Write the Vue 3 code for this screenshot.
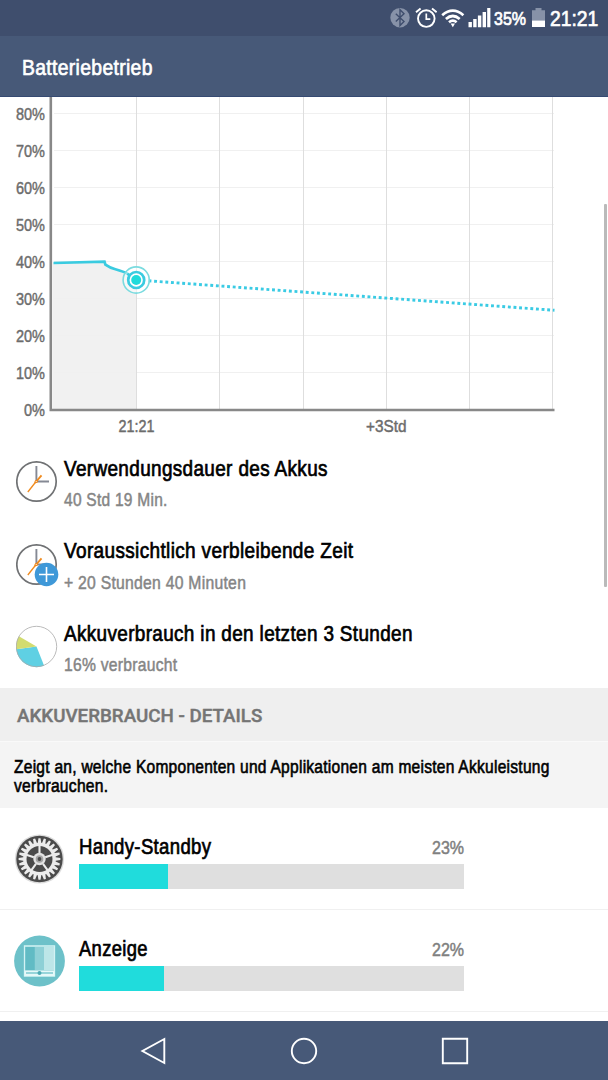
<script setup>
import { computed } from 'vue'

// squeezes a text to a given width, for the condensed look of the system font
const vFit = {
  mounted(el, { value }) {
    el.style.transform = `scaleX(${value / el.offsetWidth})`
  },
}

const yLabels = [
  { text: '80%', y: 113, width: 29 },
  { text: '70%', y: 150, width: 29 },
  { text: '60%', y: 187, width: 29 },
  { text: '50%', y: 224, width: 29 },
  { text: '40%', y: 261, width: 29 },
  { text: '30%', y: 298, width: 29 },
  { text: '20%', y: 335, width: 29 },
  { text: '10%', y: 372, width: 29 },
  { text: '0%', y: 409, width: 21 },
]
const gridX = [136, 219.5, 303, 386.2, 469.6, 552.8]

const summary = [
  { icon: 'clock', title: 'Verwendungsdauer des Akkus', titleWidth: 263.5, sub: '40 Std 19 Min.', subWidth: 104 },
  { icon: 'plus', title: 'Voraussichtlich verbleibende Zeit', titleWidth: 289.5, sub: '+ 20 Stunden 40 Minuten', subWidth: 182 },
  { icon: 'pie', title: 'Akkuverbrauch in den letzten 3 Stunden', titleWidth: 348.5, sub: '16% verbraucht', subWidth: 113.5 },
]

const consumers = [
  { icon: 'gear', name: 'Handy-Standby', nameWidth: 132.5, percent: 23 },
  { icon: 'display', name: 'Anzeige', nameWidth: 68.5, percent: 22 },
]

// outline of the toothed ring in the standby icon
const gearPath = computed(() => {
  const teeth = 24
  const points = []
  for (let i = 0; i < teeth; i++) {
    const steps = [
      [0, 16.3],
      [0.22, 20.9],
      [0.6, 20.9],
      [0.82, 16.3],
    ]
    for (const [offset, r] of steps) {
      const a = ((i + offset - 0.41) / teeth) * Math.PI * 2 - Math.PI / 2
      points.push(`${(26 + r * Math.cos(a)).toFixed(2)} ${(26 + r * Math.sin(a)).toFixed(2)}`)
    }
  }
  return `M${points.join('L')}Z`
})
const spokes = [0, 72, 144, 216, 288]
</script>

<template>
  <div class="screen">
    <div class="status">
      <svg class="status__bt" width="20" height="22" viewBox="390 7 20 22">
        <circle cx="400" cy="17.7" r="9.7" fill="#8792a8" />
        <path d="M395.8 13.8l8.2 7.8-4 4V9.8l4 4-8.2 7.8" fill="none" stroke="#3f4e6d" stroke-width="1.4" />
      </svg>
      <svg class="status__alarm" width="22" height="22" viewBox="415 7 22 22" fill="none" stroke="#fff">
        <circle cx="426.3" cy="18.6" r="8.3" stroke-width="1.9" />
        <path d="M426.3 13.5v5.6h4" stroke-width="1.7" />
        <path d="M416 12.2l4.6-3.8M436.6 12.2l-4.6-3.8" stroke-width="1.9" />
      </svg>
      <svg class="status__wifi" width="24" height="22" viewBox="441 7 24 22" fill="none" stroke="#fff" stroke-width="2.7">
        <path d="M442.2 15.2q10.6-9.2 21.2 0" />
        <path d="M445.9 19q6.9-6 13.8 0" />
        <path d="M449 22.2q3.8-3.2 7.6 0" />
        <path d="M450.6 23.6h4.4l-2.2 3.6z" fill="#fff" stroke="none" />
      </svg>
      <svg class="status__signal" width="23" height="22" viewBox="468 7 23 22" fill="#fff">
        <path d="M468.5 22h3.4v5.3h-3.4zM473.2 19h3.4v8.3h-3.4zM477.9 15.6h3.4v11.7h-3.4zM482.6 12h3.4v15.3h-3.4zM487.2 8h3.2v19.3h-3.2z" />
      </svg>
      <span class="status__percent"><span v-fit="32" class="fit">35%</span></span>
      <svg class="status__battery" width="14" height="22" viewBox="532 7 14 22">
        <path d="M535.5 8h6v2.2h3.5v11H532v-11h3.5z" fill="#8792a8" />
        <path d="M532 20.6h13V27h-13z" fill="#fff" />
      </svg>
      <span class="status__time"><span v-fit="48" class="fit">21:21</span></span>
    </div>

    <header class="title"><span v-fit="130.5" class="fit">Batteriebetrieb</span></header>

    <main class="content">
      <svg class="chart" width="608" height="343" viewBox="0 97 608 343">
        <path d="M53 263l51-1.3 1 2.6q4 3 10 4.4 12 2.6 21 11.6V409H53z" fill="#f1f1f1" />
        <g class="chart__grid">
          <line v-for="l in yLabels.slice(0, 8)" :key="l.text" x1="54" x2="554" :y1="l.y" :y2="l.y" stroke="#f0f0f0" />
          <line v-for="x in gridX" :key="x" :x1="x" :x2="x" y1="97" y2="409" stroke="#dedede" />
        </g>
        <path d="M50.8 97V410H554.5" fill="none" stroke="#888" stroke-width="2.6" />
        <path
          d="M53.5 263l51-1.3.9 3q4.5 3.2 10 4.6c5 1.4 9 2.6 12 4.4l8 6.3"
          fill="none" stroke="#3acbe0" stroke-width="2.7"
        />
        <path d="M148.5 280.8L554.5 310.3" fill="none" stroke="#3acbe4" stroke-width="2.9" stroke-dasharray="2.9 2.73" />
        <circle cx="136.2" cy="280" r="13.1" fill="#fff" fill-opacity=".5" stroke="#7adbdf" stroke-width="1.6" />
        <path d="M127.3 273.7l8.9 6.3" fill="none" stroke="#3acbe0" stroke-width="2.4" />
        <circle cx="136.2" cy="280" r="8" fill="#fff" stroke="#3acbe0" stroke-width="2.7" />
        <circle cx="136.2" cy="280" r="5" fill="#1fdbdb" />
        <g class="chart__labels">
          <text
            v-for="l in yLabels" :key="l.text" :x="45 - l.width" :y="l.y + 7"
            :textLength="l.width" lengthAdjust="spacingAndGlyphs"
          >{{ l.text }}</text>
          <text x="118.5" y="431.5" textLength="36" lengthAdjust="spacingAndGlyphs">21:21</text>
          <text x="366" y="431.5" textLength="40.5" lengthAdjust="spacingAndGlyphs">+3Std</text>
        </g>
      </svg>

      <section v-for="item in summary" :key="item.icon" class="summary">
        <svg class="summary__icon" width="44" height="44" viewBox="0.5 -0.5 44 44">
          <template v-if="item.icon === 'pie'">
            <path d="M21 21L28.6 40.2A20.5 20.5 0 0 1 .7 23.7z" fill="#5fd0e3" />
            <path d="M21 21L.7 23.7A20.5 20.5 0 0 1 3.4 10.8z" fill="#d2dc70" />
            <circle cx="21" cy="21" r="20.2" fill="none" stroke="#aaa" stroke-width=".8" />
          </template>
          <template v-else>
            <circle cx="21" cy="21" r="19.7" fill="none" stroke="#707274" stroke-width="1.7" />
            <path d="M20.9 5.5V21H33.5" fill="none" stroke="#858994" stroke-width="1.9" />
            <path d="M12.3 31.5L21 20.5" stroke="#f08a1d" stroke-width="1.3" />
            <path d="M19.5 22.5L26 14.8" stroke="#f08a1d" stroke-width="1.9" />
            <circle cx="20.7" cy="21" r="1.6" fill="#f08a1d" />
            <circle cx="20.7" cy="21" r=".6" fill="#fff" />
          </template>
          <template v-if="item.icon === 'plus'">
            <circle cx="31" cy="31" r="11.8" fill="#3e98d8" />
            <path d="M23.5 31h15M31 23.5v15" stroke="#fff" stroke-width="1.6" />
          </template>
        </svg>
        <div class="summary__text">
          <div class="summary__title"><span v-fit="item.titleWidth" class="fit">{{ item.title }}</span></div>
          <div class="summary__sub"><span v-fit="item.subWidth" class="fit">{{ item.sub }}</span></div>
        </div>
      </section>

      <h2 class="heading"><span v-fit="245.5" class="fit">AKKUVERBRAUCH - DETAILS</span></h2>
      <div class="hint">
        <div><span v-fit="535.5" class="fit">Zeigt an, welche Komponenten und Applikationen am meisten Akkuleistung</span></div>
        <div><span v-fit="94" class="fit">verbrauchen.</span></div>
      </div>

      <section v-for="c in consumers" :key="c.name" class="consumer">
        <svg class="consumer__icon" width="52" height="52" viewBox="-0.5 0 52 52">
          <template v-if="c.icon === 'gear'">
            <circle cx="26" cy="26" r="24.6" fill="#dcdcdc" />
            <circle cx="26" cy="26" r="23.2" fill="#4b4b4b" />
            <path :d="gearPath" fill="#ececec" />
            <circle cx="26" cy="26" r="13" fill="#4b4b4b" />
            <path
              v-for="a in spokes" :key="a" d="M26 20V12" :transform="`rotate(${a} 26 26)`"
              stroke="#ececec" stroke-width="2.1"
            />
            <circle cx="26" cy="26" r="6.2" fill="#e2e2e2" />
            <circle cx="26" cy="26" r="3.8" fill="#a4a4a4" />
            <circle cx="26" cy="26" r="1.9" fill="#4b4b4b" />
          </template>
          <template v-else>
            <circle cx="26" cy="26" r="25.4" fill="#6dc1c9" />
            <path d="M12 12h9.3v23H12z" fill="#61bbc4" />
            <path d="M21.3 12h9.2v23h-9.2z" fill="#8ed0d6" />
            <path d="M30.5 12H41v23H30.5z" fill="#bde6e8" />
            <path d="M11 11h30v30H11z" fill="none" stroke="#d3f3f4" stroke-width="1.3" />
            <path d="M11 35.4h30v5.6H11z" fill="#e6f9f9" />
            <path d="M12.5 38h27" stroke="#6dc1c9" stroke-width="1.3" />
            <circle cx="26" cy="38" r="2" fill="#4caab4" />
          </template>
        </svg>
        <div class="consumer__body">
          <div class="consumer__line">
            <span v-fit="c.nameWidth" class="consumer__name fit">{{ c.name }}</span>
            <span v-fit="32" class="consumer__percent">{{ c.percent }}%</span>
          </div>
          <div class="bar"><div class="bar__fill" :style="{ width: c.percent + '%' }" /></div>
        </div>
      </section>
      <div class="scrollbar" />
    </main>

    <nav class="nav">
      <svg width="28" height="28" viewBox="0 0 28 28"><path d="M25.3 2v24L3.4 14z" /></svg>
      <svg width="28" height="28" viewBox="0 0 28 28"><circle cx="14" cy="14" r="12.2" /></svg>
      <svg width="28" height="28" viewBox="0 0 28 28"><path d="M1.8 1.8h24.4v24.4H1.8z" /></svg>
    </nav>
  </div>
</template>

<style>
body {
  margin: 0;
  overflow: hidden;
}
</style>

<style scoped>
.screen {
  display: flex;
  flex-direction: column;
  width: 608px;
  height: 1080px;
  overflow: hidden;
  background: #fff;
  color: #000;
  font-family: 'Liberation Sans', Arial, sans-serif;
  -webkit-text-stroke: 0.7px currentColor;
}
svg {
  display: block;
  flex: none;
}
.fit {
  display: inline-block;
  white-space: nowrap;
  transform-origin: left center;
}
.status {
  display: flex;
  flex: none;
  box-sizing: border-box;
  height: 36px;
  padding: 7px 0 0 390px;
  background: #3f4e6d;
  color: #fff;
}
.status__alarm {
  margin-left: 5px;
}
.status__wifi {
  margin-left: 4px;
}
.status__signal {
  margin-left: 3px;
}
.status__percent {
  width: 38px;
  margin-left: 3px;
  font-size: 18px;
  line-height: 24px;
}
.status__time {
  width: 52px;
  margin-left: 4px;
  font-size: 22.5px;
  line-height: 24px;
}
.title {
  flex: none;
  box-sizing: border-box;
  height: 61px;
  padding: 3px 0 0 22px;
  border-bottom: 1px solid #364a72;
  background: #475978;
  color: #fff;
  font-size: 22.5px;
  letter-spacing: 0.4px;
  line-height: 58px;
}
.content {
  position: relative;
  flex: 1;
  min-height: 0;
  overflow: hidden;
}
.chart__grid {
  shape-rendering: crispEdges;
}
.chart__labels {
  fill: #6c6c6c;
  font-size: 16.8px;
  -webkit-text-stroke: 0;
  stroke: #6c6c6c;
  stroke-width: 0.45px;
}
.summary {
  display: flex;
  box-sizing: border-box;
  height: 82.67px;
  padding: 15.5px 0 0 16px;
}
.summary__icon {
  margin-top: 4.5px;
}
.summary__text {
  margin-left: 3.5px;
}
.summary__title {
  height: 26px;
  font-size: 22px;
  letter-spacing: 0.4px;
  line-height: 26px;
}
.summary__sub {
  height: 22px;
  margin-top: 7.5px;
  color: #858585;
  font-size: 18.5px;
  letter-spacing: 0.3px;
  line-height: 22px;
  -webkit-text-stroke-width: 0.5px;
}
.heading {
  box-sizing: border-box;
  height: 54px;
  margin: 0;
  padding-left: 16.5px;
  border-bottom: 1px solid #f9f9f9;
  background: #efefef;
  color: #757575;
  font-family: Roboto, sans-serif;
  font-size: 18.5px;
  font-weight: 500;
  line-height: 57px;
  -webkit-text-stroke-width: 0.4px;
}
.hint {
  box-sizing: border-box;
  height: 66px;
  padding: 16.5px 0 0 13.5px;
  background: #f4f4f4;
  font-size: 17.8px;
  letter-spacing: 0.3px;
  line-height: 18.5px;
  -webkit-text-stroke-width: 0.6px;
}
.hint > div {
  height: 18.5px;
}
.consumer {
  display: flex;
  box-sizing: border-box;
  height: 102px;
  padding: 25px 0 0 13px;
  border-bottom: 1px solid #f0f0f0;
}
.consumer:first-of-type {
  height: 103px;
}
.consumer__body {
  width: 385px;
  margin-left: 14px;
}
.consumer__line {
  display: flex;
  justify-content: space-between;
  height: 31px;
  line-height: 27px;
}
.consumer__name {
  font-size: 22px;
  letter-spacing: 0.4px;
}
.consumer__percent {
  color: #808080;
  font-size: 18.5px;
  line-height: 29px;
  transform-origin: right center;
  -webkit-text-stroke-width: 0.5px;
}
.bar {
  height: 25px;
  background: #dfdfdf;
}
.bar__fill {
  height: 100%;
  background: #20dcdc;
}
.scrollbar {
  position: absolute;
  top: 107px;
  right: 1px;
  width: 3.5px;
  height: 383px;
  border-radius: 1px;
  background: #bababa;
}
.nav {
  display: flex;
  flex: none;
  align-items: center;
  justify-content: space-between;
  box-sizing: border-box;
  height: 59px;
  padding: 1px 139px 0 139px;
  background: #475978;
}
.nav svg {
  fill: none;
  stroke: #fff;
  stroke-width: 1.9;
}
</style>
